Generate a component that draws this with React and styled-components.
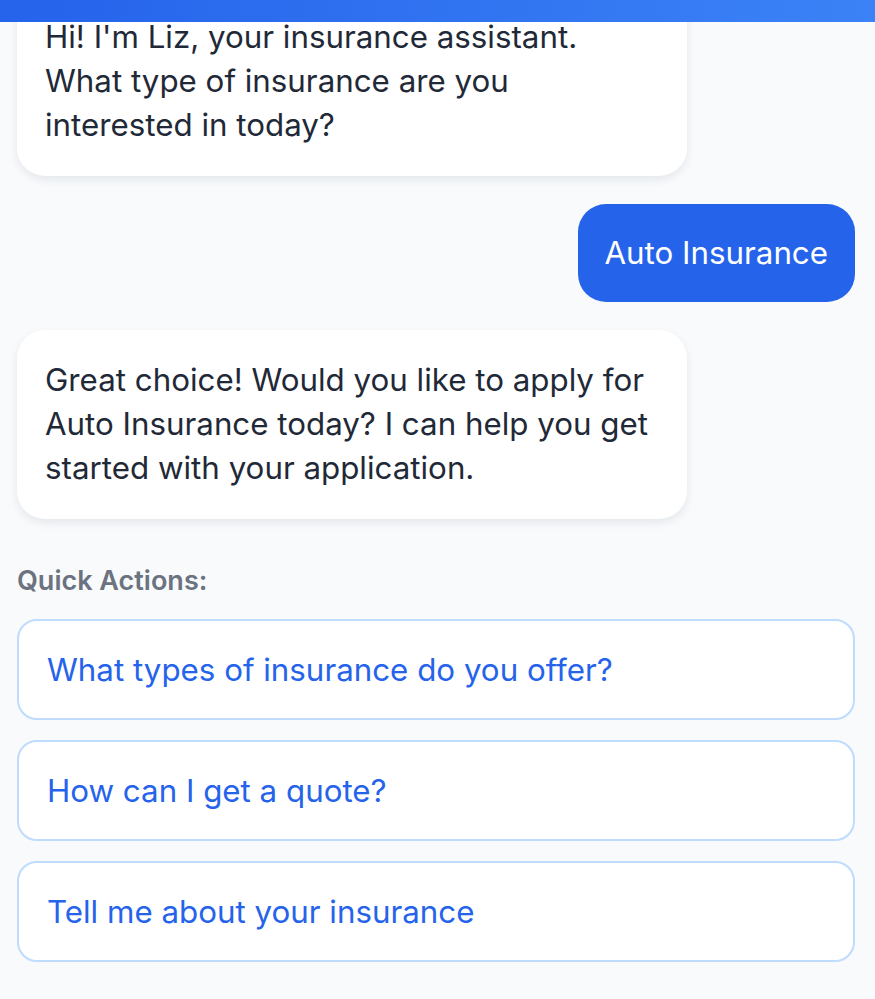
import styled, { createGlobalStyle } from "styled-components";

const GlobalStyle = createGlobalStyle`
  html, body {
    margin: 0;
    padding: 0;
    background: #f8fafc;
  }
  body {
    font-family: Inter, "Noto Sans", sans-serif;
  }
`;

const Panel = styled.div`
  width: 875px;
  height: 999px;
  display: flex;
  flex-direction: column;
  background: #f8fafc;
  overflow: hidden;
`;

const TopBar = styled.div`
  flex: 0 0 22px;
  background: linear-gradient(90deg, #2563eb 0%, #3b82f6 100%);
  position: relative;
  z-index: 2;
`;

const Feed = styled.div`
  flex: 1;
  min-height: 0;
  overflow: hidden;
  display: flex;
  flex-direction: column;
  justify-content: flex-end;
  padding: 0 20px 37px 17px;
`;

const Messages = styled.div`
  display: flex;
  flex-direction: column;
  gap: 28px;
`;

const Bubble = styled.div`
  max-width: 80%;
  box-sizing: border-box;
  padding: ${p => (p.$mine ? "27px 27px" : "28px 28px 29px")};
  border-radius: 28px;
  font-size: 31.3px;
  line-height: 44px;
  align-self: ${p => (p.$mine ? "flex-end" : "flex-start")};
  background: ${p => (p.$mine ? "#2563eb" : "#ffffff")};
  color: ${p => (p.$mine ? "#ffffff" : "#1f2937")};
  box-shadow: ${p => (p.$mine ? "none" : "0 4px 10px rgba(15, 23, 42, 0.08)")};
`;

const QuickLabel = styled.div`
  margin-top: 44px;
  font-size: 27px;
  line-height: 36px;
  font-weight: 600;
  color: #6b7280;
`;

const QuickList = styled.div`
  margin-top: 20px;
  display: flex;
  flex-direction: column;
  gap: 20px;
`;

const QuickButton = styled.button`
  display: block;
  width: 100%;
  box-sizing: border-box;
  height: 101px;
  padding: 0 28px;
  text-align: left;
  background: #ffffff;
  border: 2px solid #bfdbfe;
  border-radius: 20px;
  font-family: Inter, "Noto Sans", sans-serif;
  font-size: 31.3px;
  color: #2563eb;
  cursor: pointer;
`;

const messages = [
  { mine: false, text: "Hi! I'm Liz, your insurance assistant. What type of insurance are you interested in today?" },
  { mine: true, text: "Auto Insurance" },
  { mine: false, text: "Great choice! Would you like to apply for Auto Insurance today? I can help you get started with your application." },
];

const actions = [
  "What types of insurance do you offer?",
  "How can I get a quote?",
  "Tell me about your insurance",
];

export default function App() {
  return (
    <>
      <GlobalStyle />
      <Panel>
        <TopBar />
        <Feed>
          <Messages>
            {messages.map((m, i) => (
              <Bubble key={i} $mine={m.mine}>{m.text}</Bubble>
            ))}
          </Messages>
          <QuickLabel>Quick Actions:</QuickLabel>
          <QuickList>
            {actions.map(a => (
              <QuickButton key={a}>{a}</QuickButton>
            ))}
          </QuickList>
        </Feed>
      </Panel>
    </>
  );
}
